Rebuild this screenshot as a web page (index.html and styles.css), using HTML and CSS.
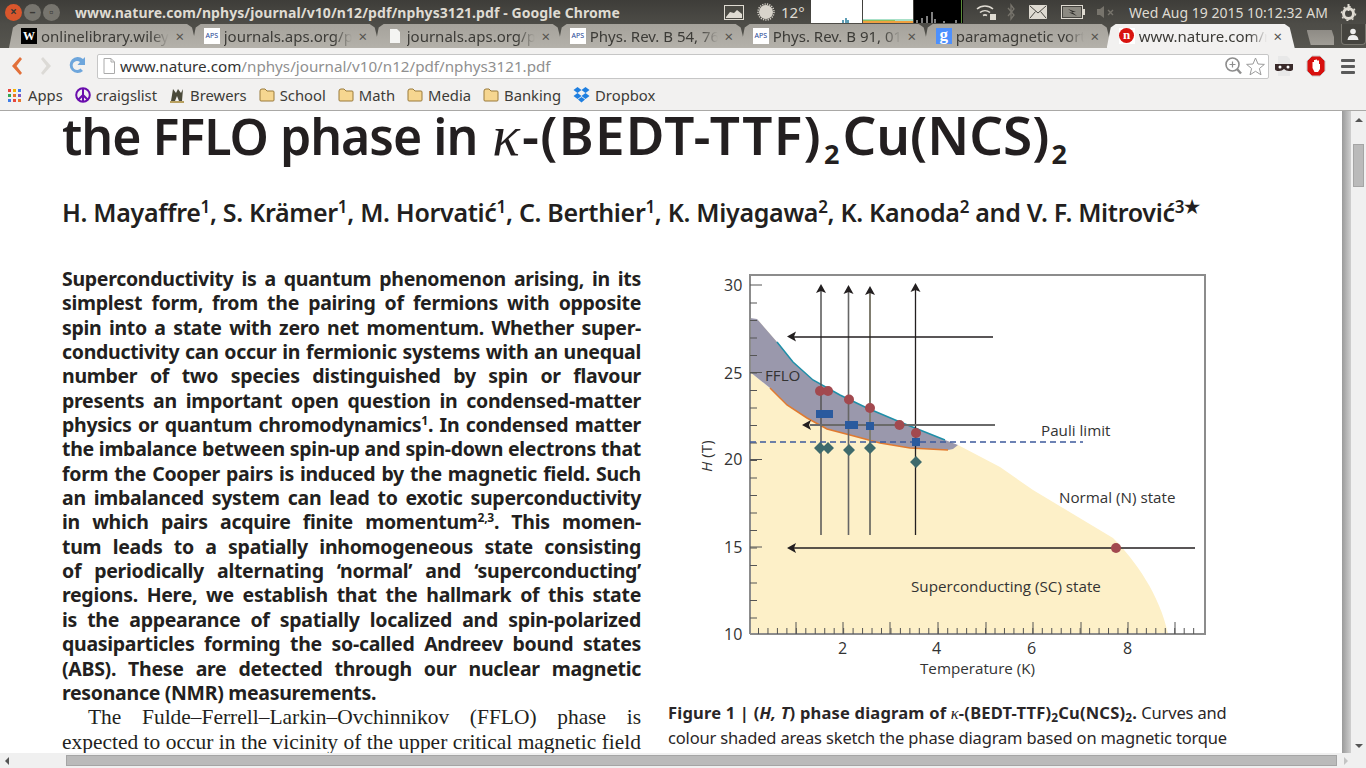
FILE: index.html
```html
<!DOCTYPE html>
<html lang="en">
<head>
  <meta charset="UTF-8">
  <title>www.nature.com/nphys/journal/v10/n12/pdf/nphys3121.pdf - Google Chrome</title>
  <link rel="stylesheet" href="styles.css">
</head>
<body>
  <!-- window title + indicators -->
  <div class="titlebar">
    <div class="winbtns">
      <span class="winbtn close">×</span>
      <span class="winbtn">–</span>
      <span class="winbtn">▫</span>
    </div>
    <div class="wintitle">www.nature.com/nphys/journal/v10/n12/pdf/nphys3121.pdf - Google Chrome</div>
    <div class="indicators">
      <svg class="ind-photo" width="20" height="15" viewBox="0 0 20 15"><rect x="0.5" y="0.5" width="19" height="14" fill="#4a4943" stroke="#dfdbd2"/><path d="M2 12 L6 7 L10 8 L13 5 L18 9 V13 H2Z" fill="#dfdbd2"/></svg>
      <svg class="ind-sun" width="18" height="18" viewBox="0 0 18 18"><circle cx="9" cy="9" r="7" fill="#d8d4cb"/><circle cx="9" cy="9" r="8" fill="none" stroke="#d8d4cb" stroke-width="1.500" stroke-dasharray="1.200 1.200"/></svg>
      <span class="ind-temp">12°</span>
      <div class="graphs">
        <svg width="51" height="23" viewBox="0 0 51 23"><rect width="51" height="23" fill="#fff"/><path d="M32 23 V20 M35 23 V18 M37 23 V20" stroke="#2a7f9f" stroke-width="1.5"/></svg>
        <svg width="50" height="23" viewBox="0 0 50 23"><rect width="50" height="23" fill="#fff"/><rect y="19" width="50" height="4" fill="#a8e0c8"/><rect y="20" width="32" height="3" fill="#8fbf5a"/><rect y="21" width="50" height="2" fill="#f0a040"/></svg>
        <svg width="49" height="23" viewBox="0 0 49 23"><rect width="49" height="23" fill="#000"/><path d="M3 23V20 M8 23V18 M13 23V16 M18 23V12 M21 23V19 M30 23V21 M42 23V20" stroke="#fff"/><path d="M47.5 23V0" stroke="#5a8a3a"/></svg>
      </div>
      <svg class="ind-wifi" width="21" height="18" viewBox="0 0 21 18" fill="none" stroke="#dfdbd2" stroke-width="1.6"><path d="M1 6 A12 12 0 0 1 17 6 M4 9.5 A8 8 0 0 1 14 9.5 M7 12.5 A4 4 0 0 1 11 12.5"/><rect x="14" y="11" width="6" height="6" fill="#dfdbd2" stroke="none"/></svg>
      <svg class="ind-bt" width="8" height="18" viewBox="0 0 8 18" fill="none" stroke="#77746c" stroke-width="1.3"><path d="M1 5 L7 12 L4 16 V2 L7 6 L1 13"/></svg>
      <svg class="ind-mail" width="18" height="14" viewBox="0 0 18 14"><rect width="18" height="14" rx="1" fill="#dfdbd2"/><path d="M1 1 L9 8 L17 1 M1 13 L6.5 6.5 M17 13 L11.5 6.5" fill="none" stroke="#4a4943"/></svg>
      <svg class="ind-batt" width="24" height="14" viewBox="0 0 24 14"><rect x="0.5" y="0.5" width="21" height="13" fill="none" stroke="#dfdbd2"/><rect x="2" y="2" width="18" height="10" fill="#8c8a82"/><rect x="22" y="4" width="2" height="6" fill="#dfdbd2"/><path d="M7 4 L15 7 L11 7 L16 11 L8 7.5 L12 7.5Z" fill="#2e2d2a"/></svg>
      <svg class="ind-vol" width="17" height="14" viewBox="0 0 17 14"><path d="M0 4 H3 L7 1 V13 L3 10 H0Z" fill="#77746c"/><path d="M11 5 L16 10 M16 5 L11 10" stroke="#77746c" stroke-width="1.4"/></svg>
      <span class="clock">Wed Aug 19 2015 10:12:32 AM</span>
      <svg class="ind-gear" width="17" height="18" viewBox="0 0 17 18"><circle cx="8.5" cy="10.500" r="5" fill="none" stroke="#dfdbd2" stroke-width="3"/><circle cx="8.5" cy="10.500" r="7" fill="none" stroke="#dfdbd2" stroke-width="1.500" stroke-dasharray="2 3.500"/><path d="M7.500 1 H9.500 V8 H7.500Z" fill="#dfdbd2"/></svg>
    </div>
  </div>

  <!-- tab strip -->
  <div class="tabstrip">
    <div class="tab"><span class="fav fav-w">W</span><span class="tabtext">onlinelibrary.wiley</span><span class="tabx">×</span></div>
    <div class="tab"><span class="fav fav-aps">APS</span><span class="tabtext">journals.aps.org/p</span><span class="tabx">×</span></div>
    <div class="tab"><svg class="fav" width="16" height="16" viewBox="0 0 16 16"><path d="M3 1 H10 L13 4 V15 H3Z" fill="#f4f4f2"/></svg><span class="tabtext">journals.aps.org/p</span><span class="tabx">×</span></div>
    <div class="tab"><span class="fav fav-aps">APS</span><span class="tabtext">Phys. Rev. B 54, 76 (</span><span class="tabx">×</span></div>
    <div class="tab"><span class="fav fav-aps">APS</span><span class="tabtext">Phys. Rev. B 91, 014</span><span class="tabx">×</span></div>
    <div class="tab"><span class="fav fav-g">g</span><span class="tabtext">paramagnetic vort</span><span class="tabx">×</span></div>
    <div class="tab tab-on"><span class="fav fav-n"><b>n</b></span><span class="tabtext">www.nature.com/n</span><span class="tabx">×</span></div>
    <div class="newtab"></div>
    <div class="profile"><svg width="12" height="12" viewBox="0 0 12 12"><circle cx="6" cy="3.5" r="2.8" fill="#eee"/><path d="M0.5 12 Q1 7 6 7 Q11 7 11.500 12Z" fill="#eee"/></svg></div>
  </div>

  <!-- toolbar -->
  <div class="toolbar">
    <svg class="nav-back" width="13" height="20" viewBox="0 0 13 20"><path d="M10 1 L2 10 L10 19 L12 17 L6.500 10 L12 3Z" fill="#e2703a"/></svg>
    <svg class="nav-fwd" width="13" height="20" viewBox="0 0 13 20"><path d="M3 1 L11 10 L3 19 L1 17 L6.500 10 L1 3Z" fill="#dcdad6"/></svg>
    <svg class="nav-reload" width="18" height="20" viewBox="0 0 18 20"><path d="M15 3 A8 8 0 1 0 15 15 L12.500 12.500 A4.500 4.500 0 1 1 12 6 L9.500 9 H17 V1Z" fill="#6ea6dc"/></svg>
    <div class="omnibox">
      <svg class="pageicon" width="12" height="16" viewBox="0 0 12 16"><path d="M1 .5 H8 L11.500 4 V15.500 H1Z" fill="#fff" stroke="#aaa"/><path d="M8 .5 V4 H11.500" fill="none" stroke="#aaa"/></svg>
      <div class="url"><span class="url-host">www.nature.com</span>/nphys/journal/v10/n12/pdf/nphys3121.pdf</div>
      <svg class="zoomicon" width="17" height="18" viewBox="0 0 17 18" fill="none" stroke="#8d8d8d"><circle cx="7.500" cy="7.500" r="6.500" stroke-width="1.600"/><path d="M4.500 7.500 H10.500 M7.500 4.500 V10.500" stroke-width="1.200"/><path d="M12 12 L16 16.500" stroke-width="2.400"/></svg>
      <svg class="staricon" width="19" height="19" viewBox="0 0 19 19"><path d="M9.500 1 L12 7 L18.400 7.400 L13.400 11.500 L15 17.800 L9.500 14.300 L4 17.800 L5.600 11.500 L.6 7.400 L7 7Z" fill="#fff" stroke="#9a9a9a"/></svg>
    </div>
    <svg class="ext-mask" width="20" height="22" viewBox="0 0 20 22"><path d="M4 1 H13 L16 4 V21 H4Z" fill="#e8e8e8"/><path d="M1 9 H19 V14 Q19 16 15 16 Q12 16 10 14 Q8 16 5 16 Q1 16 1 14Z" fill="#3a2a2a"/><circle cx="6" cy="12" r="1.500" fill="#fff"/><circle cx="14" cy="12" r="1.500" fill="#fff"/></svg>
    <svg class="ext-stop" width="20" height="22" viewBox="0 0 20 22"><path d="M6 1 H14 L19 6 V16 L14 21 H6 L1 16 V6Z" fill="#d8100e" stroke="#c8c8c8"/><path d="M6.500 13 V7 H8 V5 H9.500 V4.500 H11 V5.500 H13 V9 H14 V14 L12 17 H8.500Z" fill="#fff"/></svg>
    <div class="menuicon"><span></span><span></span><span></span></div>
  </div>

  <!-- bookmarks -->
  <div class="bookmarks">
    <div class="bm bm-apps"><span class="appgrid"><i class="c1"></i><i class="c2"></i><i class="c3"></i><i class="c4"></i><i class="c5"></i><i class="c6"></i><i class="c3"></i><i class="c1"></i><i class="c5"></i></span>Apps</div>
    <div class="bm"><svg width="16" height="16" viewBox="0 0 16 16" fill="none" stroke="#6a0dad" stroke-width="2"><circle cx="8" cy="8" r="6.800"/><path d="M8 1 V15 M8 8 L3 13 M8 8 L13 13"/></svg>craigslist</div>
    <div class="bm"><svg width="16" height="16" viewBox="0 0 16 16"><path d="M2 14 L4 2 L7 6 L9 2 L12 6 L14 2 L13 14 H10 L8 9 L6 14Z" fill="#4a4a3a"/><path d="M1 14 H15 V16 H1Z" fill="#b8a060"/></svg>Brewers</div>
    <div class="bm"><svg class="folder" viewBox="0 0 16 14"><path d="M1 3 Q1 1 3 1 H6 L8 3 H14 Q15 3 15 4 V12 Q15 13 14 13 H2 Q1 13 1 12Z" fill="#f6d690" stroke="#9a7a3a"/></svg>School</div>
    <div class="bm"><svg class="folder" viewBox="0 0 16 14"><path d="M1 3 Q1 1 3 1 H6 L8 3 H14 Q15 3 15 4 V12 Q15 13 14 13 H2 Q1 13 1 12Z" fill="#f6d690" stroke="#9a7a3a"/></svg>Math</div>
    <div class="bm"><svg class="folder" viewBox="0 0 16 14"><path d="M1 3 Q1 1 3 1 H6 L8 3 H14 Q15 3 15 4 V12 Q15 13 14 13 H2 Q1 13 1 12Z" fill="#f6d690" stroke="#9a7a3a"/></svg>Media</div>
    <div class="bm"><svg class="folder" viewBox="0 0 16 14"><path d="M1 3 Q1 1 3 1 H6 L8 3 H14 Q15 3 15 4 V12 Q15 13 14 13 H2 Q1 13 1 12Z" fill="#f6d690" stroke="#9a7a3a"/></svg>Banking</div>
    <div class="bm"><svg width="17" height="16" viewBox="0 0 17 16" fill="#1f7fe0"><path d="M4.500 0 L8.500 3 L4.500 6 L.5 3Z M12.500 0 L16.500 3 L12.500 6 L8.500 3Z M4.500 6 L8.500 9 L4.500 12 L.5 9Z M12.500 6 L16.500 9 L12.500 12 L8.500 9Z M8.500 10 L12 12.600 L8.500 15.500 L5 12.600Z"/></svg>Dropbox</div>
  </div>

  <!-- pdf viewer -->
  <div class="main">
    <div class="viewer">
      <div class="page">
        <h1 class="title">the FFLO phase in <i class="kappa">κ</i><span class="chem-a">-(BEDT-TTF)</span><span class="sub">2</span><span class="chem-b">Cu(NCS)</span><span class="sub">2</span></h1>
        <div class="authors">H. Mayaffre<sup>1</sup>, S. Krämer<sup>1</sup>, M. Horvatić<sup>1</sup>, C. Berthier<sup>1</sup>, K. Miyagawa<sup>2</sup>, K. Kanoda<sup>2</sup> and V. F. Mitrović<sup>3</sup><span class="star">★</span></div>
        <div class="columns">
          <div class="leftcol">
            <div class="abstract">
              <div>Superconductivity is a quantum phenomenon arising, in its</div>
              <div>simplest form, from the pairing of fermions with opposite</div>
              <div>spin into a state with zero net momentum. Whether super-</div>
              <div>conductivity can occur in fermionic systems with an unequal</div>
              <div>number of two species distinguished by spin or flavour</div>
              <div>presents an important open question in condensed-matter</div>
              <div>physics or quantum chromodynamics<sup>1</sup>. In condensed matter</div>
              <div>the imbalance between spin-up and spin-down electrons that</div>
              <div>form the Cooper pairs is induced by the magnetic field. Such</div>
              <div>an imbalanced system can lead to exotic superconductivity</div>
              <div>in which pairs acquire finite momentum<sup>2,3</sup>. This momen-</div>
              <div>tum leads to a spatially inhomogeneous state consisting</div>
              <div>of periodically alternating ‘normal’ and ‘superconducting’</div>
              <div>regions. Here, we establish that the hallmark of this state</div>
              <div>is the appearance of spatially localized and spin-polarized</div>
              <div>quasiparticles forming the so-called Andreev bound states</div>
              <div>(ABS). These are detected through our nuclear magnetic</div>
              <div class="lastline">resonance (NMR) measurements.</div>
            </div>
            <div class="bodytext">
              <div class="indent">The Fulde–Ferrell–Larkin–Ovchinnikov (FFLO) phase is</div>
              <div>expected to occur in the vicinity of the upper critical magnetic field</div>
            </div>
          </div>
          <div class="rightcol">
            <svg class="figure" width="572" height="420" viewBox="668 270 572 420">
              <!-- shaded regions -->
              <path class="sc" d="M750 372 L770 388 L787 405 L807 418 L827 429 L850 435 L880 443 L910 448 L948 450 L958 445 L1000 467 L1033 490 L1113 538 C1135 560 1160 595 1168 634 H750Z"/>
              <path class="sc" d="M757 319 L777 342 L770 345Z"/>
              <path class="fflo" d="M750 318 L757 319 L777 342 L793 362 L813 380 L840 395 L867 408 L900 422 L945 440 L958 445 L953 449 L948 450 L910 448 L880 443 L850 435 L827 429 L807 418 L787 405 L770 388 L750 372Z"/>
              <path class="edge-top" d="M777 342 L793 362 L813 380 L840 395 L867 408 L900 422 L945 440"/>
              <path class="edge-low" d="M770 388 L787 405 L807 418 L827 429 L850 435 L880 443 L910 448 L948 450"/>
              <!-- frame and ticks -->
              <path class="frame" d="M750 634 V275 H1205 V634 H750"/>
              <path class="tick-y-major" d="M750 285 H762 M750 372.500 H762 M750 459.500 H762 M750 547 H762"/>
              <line class="tick-y-minor" x1="753.500" y1="302.500" x2="753.500" y2="634"/>
              <line class="tick-x-minor" x1="758" y1="631" x2="1195" y2="631"/>
              <path class="tick-x-major" d="M796 634 V622 M843 634 V622 M890 634 V622 M938 634 V622 M986 634 V622 M1033 634 V622 M1081 634 V622 M1128 634 V622 M1175 634 V622"/>
              <!-- measurement sweeps -->
              <path class="sweep s1" d="M821 290 V535"/>
              <path class="sweep s2" d="M848.500 292 V535"/>
              <path class="sweep s3" d="M870 292 V535"/>
              <path class="sweep" d="M915.500 290 V535 M790 337 H993 M790 548 H1195"/>
              <path class="sweep-grey" d="M810 425 H995"/>
              <path class="head" d="M821 284 L826 293 L821 291 L816 293Z M848.500 285 L853.500 294 L848.500 292 L843.500 294Z M870 286 L875 295 L870 293 L865 295Z M915.500 283 L920.500 292 L915.500 290 L910.500 292Z M787 336.500 L796 331.500 L794 336.500 L796 341.500Z M802 425 L811 420 L809 425 L811 430Z M787 548 L796 543 L794 548 L796 553Z"/>
              <line class="pauli" x1="750" y1="442" x2="1083" y2="442"/>
              <!-- data points -->
              <g class="dots">
                <circle cx="820" cy="391" r="5"/><circle cx="828" cy="391" r="5"/><circle cx="849" cy="399.500" r="5"/><circle cx="870" cy="408" r="5"/><circle cx="899.500" cy="425" r="5"/><circle cx="916" cy="433" r="5"/><circle cx="1116" cy="548" r="5"/>
              </g>
              <g class="squares">
                <rect x="816" y="410" width="17" height="8"/><rect x="845" y="421" width="13" height="8"/><rect x="866" y="422" width="8" height="8"/><rect x="912" y="438" width="8" height="8"/>
              </g>
              <path class="diamonds" d="M820 442 L826 448 L820 454 L814 448Z M828 442 L834 448 L828 454 L822 448Z M849 444 L855 450 L849 456 L843 450Z M870 442 L876 448 L870 454 L864 448Z M916 456 L922 462 L916 468 L910 462Z"/>
              <!-- labels -->
              <g class="figlabels">
                <g class="ticknums">
                  <text x="724" y="291">30</text><text x="724" y="379">25</text><text x="724" y="465">20</text><text x="724" y="553">15</text><text x="724" y="640">10</text>
                  <text x="838" y="654">2</text><text x="932" y="654">4</text><text x="1027" y="654">6</text><text x="1123" y="654">8</text>
                </g>
                <text x="765" y="381">FFLO</text>
                <text x="1041" y="436">Pauli limit</text>
                <text x="1059" y="503">Normal (N) state</text>
                <text x="911" y="592">Superconducting (SC) state</text>
                <text x="920" y="674">Temperature (K)</text>
                <text x="0" y="0" transform="translate(712 472) rotate(-90)"><tspan font-style="italic">H</tspan> (T)</text>
              </g>
            </svg>
            <div class="caption">
              <div><b>Figure 1 | (<i>H, T</i>) phase diagram of <i class="kappa">κ</i>-(BEDT-TTF)<span class="sub">2</span>Cu(NCS)<span class="sub">2</span>.</b> Curves and</div>
              <div>colour shaded areas sketch the phase diagram based on magnetic torque</div>
              <div>measurements<sup>19</sup></div>
            </div>
          </div>
        </div>
      </div>
    </div>
    <div class="edge"></div>
    <div class="vscroll">
      <span class="arrow-up"></span>
      <div class="vthumb"></div>
      <span class="arrow-down"></span>
    </div>
  </div>
  <div class="hscroll">
    <span class="arrow-left"></span>
    <div class="hthumb"></div>
    <span class="arrow-right"></span>
  </div>
</body>
</html>
```

FILE: styles.css
```css
* {
  box-sizing: border-box;
}

body {
  margin: 0;
  width: 1366px;
  height: 768px;
  overflow: hidden;
  display: flex;
  flex-direction: column;
  font-family: "Noto Sans", sans-serif;
  background: #f2f1f0;
}

/* title bar */
.titlebar {
  height: 24px;
  display: flex;
  align-items: center;
  background: linear-gradient(#3e3d39, #4d4c47);
  color: #dfdbd2;
}

.winbtns {
  display: flex;
  gap: 2px;
  padding-left: 5px;
  width: 75px;
}

.winbtn {
  width: 17px;
  height: 17px;
  border-radius: 50%;
  background: #77756e;
  color: #3a3935;
  font-size: 12px;
  line-height: 16px;
  text-align: center;
  font-weight: 700;
}

.winbtn.close {
  background: #d9562c;
}

.wintitle {
  font-size: 14px;
  font-weight: 700;
  letter-spacing: 0.08px;
  white-space: nowrap;
  width: 649px;
}

.indicators {
  display: flex;
  align-items: center;
  flex: 1;
  font-size: 15px;
  white-space: nowrap;
}

.ind-sun {
  margin-left: 13px;
}

.ind-temp {
  margin-left: 6px;
  width: 30px;
}

.graphs {
  display: flex;
  gap: 1px;
  height: 23px;
  margin-top: -1px;
}

.graphs svg {
  display: block;
}

.ind-wifi {
  margin-left: 13px;
}

.ind-bt {
  margin-left: 10px;
}

.ind-mail {
  margin-left: 14px;
}

.ind-batt {
  margin-left: 14px;
}

.ind-vol {
  margin-left: 12px;
}

.clock {
  margin-left: 15px;
  width: 211px;
  font-size: 14px;
}

/* tabs */
.tabstrip {
  height: 24px;
  display: flex;
  padding-left: 9px;
  background: linear-gradient(#4d4c47, #56554f);
}

.tab {
  width: 188px;
  margin-right: -5px;
  display: flex;
  align-items: center;
  padding: 0 10px 1px 12px;
  background: linear-gradient(#a5a29b, #b4b1aa);
  clip-path: polygon(0 100%, 4px 15%, 9px 0, 178px 0, 183px 15%, 188px 100%);
  color: #3c3b37;
  font-size: 15px;
}

.tab-on {
  background: #f2f1f0;
}

.fav {
  flex: none;
  width: 16px;
  height: 16px;
  display: block;
}

.fav-w {
  background: #000;
  color: #fff;
  font: 700 12px/16px "Liberation Serif", serif;
  text-align: center;
}

.fav-aps {
  background: #fff;
  color: #1c3f94;
  font-size: 7px;
  line-height: 16px;
  text-align: center;
  overflow: hidden;
}

.fav-g {
  background: #4d90fe;
  color: #fff;
  font: 700 17px/13px "Liberation Serif", serif;
  text-align: center;
}

.fav-n {
  background: #fff;
  text-align: center;
}

.fav-n b {
  display: block;
  margin: 0 auto;
  width: 15px;
  height: 15px;
  border-radius: 50%;
  background: #d8130f;
  color: #fff;
  font: 700 13px/13px "Liberation Serif", serif;
}

.tabtext {
  flex: 1;
  min-width: 0;
  margin-left: 4px;
  white-space: nowrap;
  overflow: hidden;
  -webkit-mask-image: linear-gradient(to right, #000 86%, transparent 100%);
  mask-image: linear-gradient(to right, #000 86%, transparent 100%);
}

.tabx {
  flex: none;
  width: 14px;
  margin-left: 4px;
  text-align: center;
  font-size: 15px;
  color: #55534e;
}

.newtab {
  width: 30px;
  height: 15px;
  margin: 6px 0 0 17px;
  background: linear-gradient(#8e8b85, #a09d96);
  clip-path: polygon(0 0, 25px 0, 30px 100%, 4px 100%);
}

.profile {
  width: 28px;
  height: 21px;
  margin-left: 7px;
  display: flex;
  align-items: center;
  justify-content: center;
  background: #45443f;
  border: 1px solid #7a7870;
  border-top: none;
  border-radius: 0 0 4px 4px;
}

/* toolbar */
.toolbar {
  height: 36px;
  display: flex;
  align-items: center;
  background: #f2f1f0;
}

.nav-back {
  margin-left: 10px;
}

.nav-fwd {
  margin-left: 17px;
}

.nav-reload {
  margin-left: 15px;
}

.omnibox {
  width: 1172px;
  height: 25px;
  margin-left: 11px;
  display: flex;
  align-items: center;
  padding: 0 3px 0 5px;
  background: #fff;
  border: 1px solid #c6c6c6;
  border-radius: 2px;
}

.url {
  flex: 1;
  margin-left: 5px;
  padding-bottom: 1px;
  font-size: 15.200px;
  color: #8f8f8f;
  white-space: nowrap;
}

.url-host {
  color: #333;
}

.staricon {
  margin-left: 4px;
}

.ext-mask {
  margin-left: 5px;
}

.ext-stop {
  margin-left: 12px;
}

.menuicon {
  width: 14px;
  margin-left: 15px;
  display: flex;
  flex-direction: column;
  gap: 3px;
}

.menuicon span {
  height: 3px;
  background: #5a5a5a;
  border-radius: 1px;
}

/* bookmarks */
.bookmarks {
  height: 26px;
  display: flex;
  align-items: center;
  padding: 0 0 4px 8px;
  gap: 12px;
  background: #f2f1f0;
  color: #3c3b37;
  font-size: 14.800px;
}

.bm {
  display: flex;
  align-items: center;
  gap: 5px;
}

.bm-apps {
  gap: 7px;
}

.appgrid {
  width: 13px;
  height: 13px;
  display: grid;
  grid-template-columns: repeat(3, 3px);
  grid-auto-rows: 3px;
  gap: 2px;
}

.appgrid .c1 { background: #e8453c; }
.appgrid .c2 { background: #f4b400; }
.appgrid .c3 { background: #3f7ee8; }
.appgrid .c4 { background: #34a853; }
.appgrid .c5 { background: #e8762c; }
.appgrid .c6 { background: #7a5ac8; }

.folder {
  width: 16px;
  height: 14px;
}

/* viewer */
.main {
  height: 643px;
  display: flex;
  border-top: 1px solid #a9a8a6;
}

.viewer {
  width: 1342px;
  overflow: hidden;
  background: #fff;
}

.page {
  padding: 1px 0 0 62px;
  color: #231f20;
}

.title {
  margin: 0;
  height: 55px;
  font-size: 50px;
  line-height: 46px;
  font-weight: 600;
  letter-spacing: -1px;
  white-space: nowrap;
}

.title .kappa {
  font-size: 1.15em;
  margin: 0 3px 0 3px;
}

.chem-a {
  font-size: 53px;
  letter-spacing: 1.300px;
}

.chem-b {
  font-size: 53px;
  letter-spacing: 0;
}

.kappa {
  font-family: "Liberation Serif", serif;
  font-weight: 400;
}

.sub {
  font-size: 0.72em;
  vertical-align: -0.22em;
  line-height: 0;
}

.title .sub {
  font-size: 27px;
  font-weight: 700;
  vertical-align: -9px;
  margin: 0 3px 0 2px;
  letter-spacing: 0;
}

.authors {
  margin-top: 28px;
  height: 44px;
  font-size: 25px;
  line-height: 34px;
  font-weight: 600;
  letter-spacing: -0.31px;
  white-space: nowrap;
}

.authors sup {
  font-size: 0.68em;
  line-height: 0;
  vertical-align: 0.55em;
}

.star {
  font-size: 0.72em;
  line-height: 0;
  vertical-align: 0.5em;
}

.columns {
  display: flex;
  gap: 27px;
  margin-top: 28px;
}

.leftcol {
  width: 579px;
  flex: none;
}

.abstract {
  font-size: 19.500px;
  line-height: 24.350px;
  font-weight: 700;
  letter-spacing: -0.3px;
}

.abstract div,
.bodytext div {
  text-align: justify;
  text-align-last: justify;
  white-space: nowrap;
}

.abstract .lastline {
  text-align-last: left;
}

.abstract sup {
  font-size: 0.62em;
  line-height: 0;
  vertical-align: 0.6em;
}

.bodytext {
  font-family: "Liberation Serif", serif;
  font-size: 21.450px;
  line-height: 24.500px;
}

.indent {
  padding-left: 26px;
}

.figure {
  display: block;
  margin-top: 3px;
}

.sc {
  fill: #fdf0c8;
}

.fflo {
  fill: #9a98ac;
}

.edge-top,
.edge-low {
  fill: none;
  stroke-width: 1.500;
}

.edge-top {
  stroke: #1f8fa8;
}

.edge-low {
  stroke: #e07a30;
}

.frame {
  fill: none;
  stroke: #8c8c8c;
  stroke-width: 2;
}

.tick-y-major,
.tick-x-major,
.tick-x-minor,
.tick-y-minor {
  fill: none;
  stroke: #555;
}

.tick-y-minor {
  stroke-width: 7;
  stroke-dasharray: 1 16.500;
}

.tick-x-minor {
  stroke-width: 6;
  stroke-dasharray: 1 8.460;
}

.sweep {
  fill: none;
  stroke: #231f20;
  stroke-width: 1.300;
}

.sweep.s1 {
  stroke: #555;
  stroke-width: 1.500;
}

.sweep.s2 {
  stroke: #666;
  stroke-width: 1.600;
}

.sweep.s3 {
  stroke: #807d70;
  stroke-width: 2;
}

.sweep-grey {
  fill: none;
  stroke: #6a6a6a;
  stroke-width: 2;
}

.head {
  fill: #231f20;
}

.pauli {
  stroke: #3c5a9c;
  stroke-width: 1.400;
  stroke-dasharray: 6 4;
}

.dots {
  fill: #a2494f;
}

.squares {
  fill: #2a5a9e;
}

.diamonds {
  fill: #3e6a6c;
}

.figlabels text {
  font-family: "Open Sans", sans-serif;
  font-size: 15.200px;
  fill: #333;
}

.ticknums text {
  font-size: 16px;
}

.caption {
  margin-top: 11px;
  font-size: 16.500px;
  line-height: 24px;
  color: #2a2627;
  white-space: nowrap;
  letter-spacing: -0.16px;
}

.caption b {
  font-weight: 700;
  letter-spacing: 0.2px;
}

.caption sup {
  font-size: 0.6em;
  line-height: 0;
}

/* scrollbars */
.edge {
  width: 9px;
  background: linear-gradient(to right, #9a9a9a, #cfcfcf);
}

.vscroll {
  width: 15px;
  display: flex;
  flex-direction: column;
  align-items: center;
  background: #f0f0f0;
}

.arrow-up {
  margin-top: 7px;
  border: 4px solid transparent;
  border-top: none;
  border-bottom: 4px solid #555;
}

.vthumb {
  width: 11px;
  height: 43px;
  margin-top: 22px;
  background: #bababa;
  border: 1px solid #a5a5a5;
}

.arrow-down {
  margin-top: auto;
  margin-bottom: 5px;
  border: 4px solid transparent;
  border-bottom: none;
  border-top: 4px solid #555;
}

.hscroll {
  height: 15px;
  display: flex;
  align-items: center;
  background: #f0f0f0;
}

.arrow-left {
  margin-left: 5px;
  border: 4px solid transparent;
  border-left: none;
  border-right: 4px solid #555;
}

.hthumb {
  width: 1271px;
  height: 11px;
  margin-left: 57px;
  background: #bababa;
  border: 1px solid #a5a5a5;
}

.arrow-right {
  margin-left: 7px;
  border: 4px solid transparent;
  border-right: none;
  border-left: 4px solid #c4c4c4;
}
```
